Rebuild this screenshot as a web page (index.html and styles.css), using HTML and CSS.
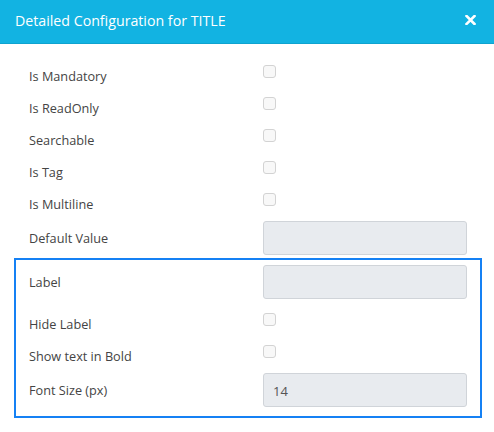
FILE: index.html
```html
<!DOCTYPE html>
<html>
<head>
<meta charset="utf-8">
<link rel="stylesheet" href="styles.css">
</head>
<body>
<div class="dialog">
  <div class="header">
    <span class="title">Detailed Configuration for TITLE</span>
    <svg class="close" width="11" height="10" viewBox="0 0 11 10"><path d="M1.5 1 L9.5 9 M9.5 1 L1.5 9" stroke="#fff" stroke-width="2.6" stroke-linecap="square"/></svg>
  </div>
  <div class="body">
    <div class="row check"><label>Is Mandatory</label><input type="checkbox" class="cb"></div>
    <div class="row check"><label>Is ReadOnly</label><input type="checkbox" class="cb"></div>
    <div class="row check"><label>Searchable</label><input type="checkbox" class="cb"></div>
    <div class="row check"><label>Is Tag</label><input type="checkbox" class="cb"></div>
    <div class="row check"><label>Is Multiline</label><input type="checkbox" class="cb"></div>
    <div class="row field"><label>Default Value</label><input type="text" class="tb" disabled></div>
    <div class="box">
      <div class="row field first"><label>Label</label><input type="text" class="tb" disabled></div>
      <div class="row check"><label>Hide Label</label><input type="checkbox" class="cb"></div>
      <div class="row check"><label>Show text in Bold</label><input type="checkbox" class="cb"></div>
      <div class="row field"><label>Font Size (px)</label><input type="text" class="tb" value="14" disabled></div>
    </div>
  </div>
</div>
</body>
</html>
```
FILE: styles.css
```css
* { box-sizing: border-box; }
html, body { margin: 0; padding: 0; background: #fff; }
body { font-family: "Open Sans", "Noto Sans", sans-serif; color: #444; width: 494px; height: 432px; overflow: hidden; }
.header {
  height: 44px;
  background: #12b3e2;
  border-bottom: 1px solid #0fa3cf;
  display: flex;
  align-items: center;
  justify-content: space-between;
  padding: 0 18px 0 15px;
}
.title { color: #fff; font-size: 14.2px; line-height: 20px; margin-top: -1px; }
.close { display: block; margin-top: -3px; }
.body { padding-top: 14px; }
.row {
  display: grid;
  grid-template-columns: 234px 204px;
  padding-left: 29px;
}
.row label { font-size: 12.7px; line-height: 20px; color: #444; }
.row.check { height: 32px; }
.row.check label { padding-top: 8px; }
.cb {
  -webkit-appearance: none;
  appearance: none;
  margin: 7px 0 0 0;
  width: 13px;
  height: 13px;
  border: 1px solid #d3d3d3;
  border-radius: 3px;
  background: #f8f8f8;
}
.row.field { height: 40px; align-items: center; }
.tb {
  -webkit-appearance: none;
  appearance: none;
  margin: 0;
  height: 34px;
  width: 204px;
  border: 1px solid #d0d4d9;
  border-radius: 3px;
  background: #e8ebef;
  font-family: inherit;
  font-size: 13px;
  color: #555;
  padding: 2px 9px 0;
}
.box {
  margin-left: 14px;
  width: 468px;
  border: 2px solid #1581f4;
  padding: 2px 0 6px;
}
.box .row { padding-left: 13px; }
.box .row.field.first { height: 44px; align-items: start; padding-top: 3px; }
.box .row.field.first label { line-height: 34px; }
```
